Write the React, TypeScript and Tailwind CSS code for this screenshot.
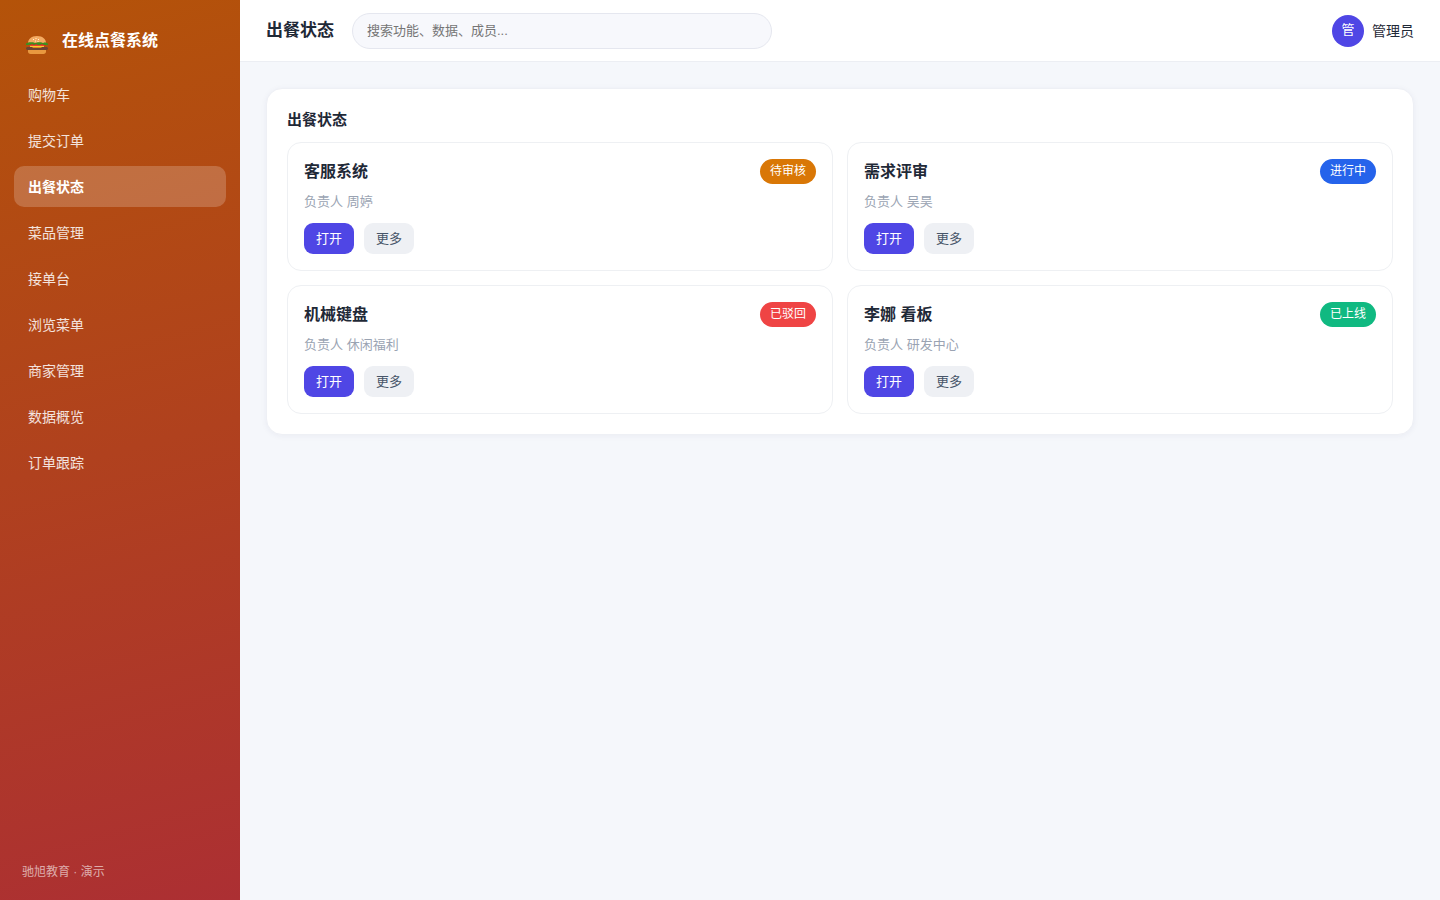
const navItems = ['购物车', '提交订单', '出餐状态', '菜品管理', '接单台', '浏览菜单', '商家管理', '数据概览', '订单跟踪'];
const activeItem = '出餐状态';

const cards = [
  { title: '客服系统', owner: '周婷', status: '待审核', tone: 'bg-[#d97706]' },
  { title: '需求评审', owner: '吴昊', status: '进行中', tone: 'bg-[#2563eb]' },
  { title: '机械键盘', owner: '休闲福利', status: '已驳回', tone: 'bg-[#ef4444]' },
  { title: '李娜 看板', owner: '研发中心', status: '已上线', tone: 'bg-[#10b981]' },
];

function BurgerIcon() {
  return (
    <svg className="mt-2 h-[18px] w-[22px]" viewBox="0 0 22 18" aria-hidden="true">
      <path d="M2 7C2 3.5 5 0 11 0s9 3.500 9 7z" fill="#f4ab62" />
      <path d="M3 7h16v3H3z" fill="#e5252a" />
      <path d="M0 9V7.500L3 6.200h4L9 7l3-.8h3l2 .8 2-.8 3 1.300V9h-4l-2-1-2 1h-2l-2-1-2 1H8L6 8 4 9z" fill="#3f8f1f" />
      <path d="M4 9.800h14v1.700H4z" fill="#fdc82f" />
      <path d="M1 11h5l1 1h8l1-1h5l1 1v1l-1 1H1l-1-1v-1z" fill="#6d4332" />
      <path d="M2 14h18v1.500c0 1.500-1 2.500-2.500 2.500h-13C3 18 2 17 2 15.500z" fill="#e8983f" />
      <path d="M7 3h1v1H7zM9.500 2h1v1h-1zM12 3h1v1h-1zM9 4.500h1v1H9zM11.500 5h1v1h-1z" fill="#fff0d2" />
    </svg>
  );
}

function Sidebar() {
  return (
    <aside className="flex w-60 shrink-0 flex-col bg-[linear-gradient(165deg,#b45309,#ac2f33)] px-3.5 text-white">
      <div className="flex h-[74px] items-center gap-3.5 pb-1 pl-3 pt-3">
        <BurgerIcon />
        <span className="text-base font-bold">在线点餐系统</span>
      </div>
      <nav className="flex flex-col gap-[5px]">
        {navItems.map((item) => (
          <a
            key={item}
            href="#"
            aria-current={item === activeItem ? 'page' : undefined}
            className={
              item === activeItem
                ? 'flex h-[41px] items-center rounded-[10px] bg-white/20 px-3.5 text-sm font-bold text-white'
                : 'flex h-[41px] items-center rounded-[10px] px-3.5 text-sm text-white/85'
            }
          >
            {item}
          </a>
        ))}
      </nav>
      <p className="mt-auto px-2 pb-5 text-xs leading-4 text-white/60">驰旭教育 · 演示</p>
    </aside>
  );
}

function Header() {
  return (
    <header className="flex h-[62px] shrink-0 items-center border-b border-[#eceef3] bg-white px-[26px]">
      <h1 className="shrink-0 text-[17px] font-bold">出餐状态</h1>
      <input
        type="search"
        aria-label="搜索"
        placeholder="搜索功能、数据、成员..."
        className="ml-[18px] h-9 w-full max-w-[420px] rounded-full border border-[#e5e7ef] bg-[#f7f8fc] px-3.5 text-[13px] outline-none placeholder:text-[#757575]"
      />
      <div className="ml-auto flex shrink-0 items-center gap-2 text-sm">
        <span className="flex size-8 items-center justify-center rounded-full bg-[#4f46e5] text-[13px] text-white">管</span>
        <span>管理员</span>
      </div>
    </header>
  );
}

function Card({ title, owner, status, tone }: (typeof cards)[number]) {
  return (
    <article className="rounded-[14px] border border-[#eef0f3] p-4">
      <div className="flex items-start justify-between">
        <h3 className="text-base font-bold leading-[26px]">{title}</h3>
        <span className={`rounded-full px-2.5 text-xs leading-[25px] text-white ${tone}`}>{status}</span>
      </div>
      <p className="mt-2 text-[13px] leading-[18px] text-[#9aa3b2]">负责人 {owner}</p>
      <div className="mt-3 flex gap-2.5">
        <button type="button" className="h-[31px] rounded-[9px] bg-[#4f46e5] px-3 text-[13px] text-white">打开</button>
        <button type="button" className="h-[31px] rounded-[9px] bg-[#eef0f4] px-3 text-[13px] text-[#475569]">更多</button>
      </div>
    </article>
  );
}

export default function App() {
  return (
    <div className="flex min-h-screen bg-[#f5f7fb] font-['Liberation_Sans','Noto_Sans_CJK_SC',sans-serif] text-[#1f2937]">
      <Sidebar />
      <div className="flex min-w-0 flex-1 flex-col">
        <Header />
        <main className="px-[26px] py-[26px]">
          <section className="rounded-2xl border border-[#eef0f5] bg-white p-5 shadow-[0_1px_6px_rgba(30,41,90,0.05)]">
            <h2 className="mb-3 text-[15px] font-bold leading-[21px]">出餐状态</h2>
            <div className="grid grid-cols-2 gap-3.5">
              {cards.map((card) => (
                <Card key={card.title} {...card} />
              ))}
            </div>
          </section>
        </main>
      </div>
    </div>
  );
}
